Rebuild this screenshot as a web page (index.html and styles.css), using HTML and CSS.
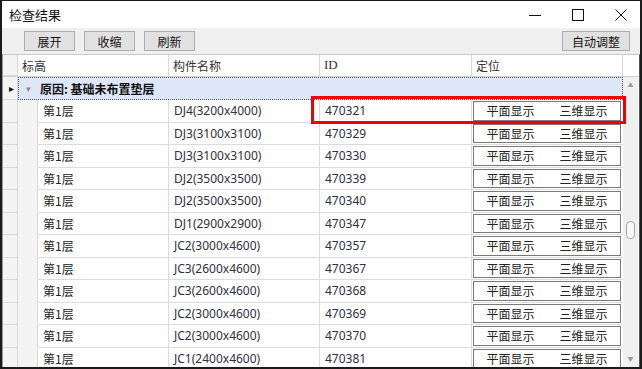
FILE: index.html
```html
<!DOCTYPE html>
<html lang="zh-CN">
<head>
    <meta charset="UTF-8">
    <title>检查结果</title>
    <link rel="stylesheet" href="styles.css">
</head>
<body>
    <div class="window">
        <div class="titlebar">
            <span class="title">检查结果</span>
            <div class="controls">
                <svg width="14" height="14" viewBox="0 0 14 14"><path d="M1 7.5h12" stroke="#111" stroke-width="1"/></svg>
                <svg width="14" height="14" viewBox="0 0 14 14"><rect x="1.5" y="1.5" width="11" height="11" fill="none" stroke="#111" stroke-width="1"/></svg>
                <svg width="14" height="14" viewBox="0 0 14 14"><path d="M1.5 1.5l11 11M12.5 1.5l-11 11" stroke="#111" stroke-width="1"/></svg>
            </div>
        </div>
        <div class="toolbar">
            <button class="btn">展开</button>
            <button class="btn">收缩</button>
            <button class="btn">刷新</button>
            <button class="btn btn-auto">自动调整</button>
        </div>
        <div class="grid">
            <div class="grid-head">
                <div class="hcell ind"></div>
                <div class="hcell">标高</div>
                <div class="hcell">构件名称</div>
                <div class="hcell id-head">ID</div>
                <div class="hcell">定位</div>
                <div class="hcell sb"></div>
            </div>
            <div class="grid-body">
                <div class="rows" id="rows">
                    <div class="group-row">
                        <div class="ind"><span class="cur">&#9656;</span></div>
                        <div class="group-cell">
                            <span class="tog">&#9662;</span>
                            <b>原因: 基础未布置垫层</b>
                        </div>
                    </div>
                </div>
                <div class="vscroll">
                    <span class="arr">&#9650;</span>
                    <div class="thumb"></div>
                    <span class="arr">&#9660;</span>
                </div>
            </div>
            <div class="highlight"></div>
        </div>
    </div>

    <script>
        const items = [
            ['DJ4(3200x4000)', '470321'],
            ['DJ3(3100x3100)', '470329'],
            ['DJ3(3100x3100)', '470330'],
            ['DJ2(3500x3500)', '470339'],
            ['DJ2(3500x3500)', '470340'],
            ['DJ1(2900x2900)', '470347'],
            ['JC2(3000x4600)', '470357'],
            ['JC3(2600x4600)', '470367'],
            ['JC3(2600x4600)', '470368'],
            ['JC2(3000x4600)', '470369'],
            ['JC2(3000x4600)', '470370'],
            ['JC1(2400x4600)', '470381']
        ];
        const rows = document.getElementById('rows');
        items.forEach(function (item) {
            const row = document.createElement('div');
            row.className = 'row';
            row.innerHTML = `
                <div class="ind"></div>
                <div class="indent"></div>
                <div class="cell">第1层</div>
                <div class="cell">${item[0]}</div>
                <div class="cell">${item[1]}</div>
                <div class="cell pos">
                    <div class="pos-box"><span>平面显示</span><span>三维显示</span></div>
                </div>
            `;
            rows.appendChild(row);
        });
    </script>
</body>
</html>
```

FILE: styles.css
```css
body {
    margin: 0;
    font-family: "Noto Sans", "Noto Sans CJK SC", sans-serif;
    font-size: 12px;
    color: #222;
}
.window {
    width: 642px;
    height: 369px;
    box-sizing: border-box;
    border: 2px solid #1b1b1b;
    border-top-width: 1px;
    background: #fff;
    display: flex;
    flex-direction: column;
    overflow: hidden;
}
.titlebar {
    height: 27px;
    flex: none;
    display: flex;
    align-items: center;
    justify-content: space-between;
    background: #fff;
}
.title {
    margin-left: 7px;
    font-family: "Noto Sans CJK SC", sans-serif;
    font-size: 13px;
    color: #111;
}
.controls {
    display: flex;
    gap: 29px;
    margin-right: 12px;
}
.controls svg {
    display: block;
}
.toolbar {
    height: 26px;
    flex: none;
    background: #f0f0f0;
    display: flex;
    align-items: center;
    padding: 0 10px 0 22px;
}
.btn {
    height: 20px;
    width: 51px;
    margin-right: 9px;
    padding: 0;
    background: #e1e1e1;
    border: 1px solid #adadad;
    font-family: "Noto Sans CJK SC", sans-serif;
    font-size: 12px;
    color: #111;
}
.btn-auto {
    width: 68px;
    margin-left: auto;
    margin-right: 0;
}
.grid {
    flex: 1;
    position: relative;
    display: flex;
    flex-direction: column;
    border-left: 1px solid #9a9a9a;
    border-right: 1px solid #555;
    border-top: 1px solid #c8c8c8;
    min-height: 0;
}
.grid-head {
    display: flex;
    height: 21px;
    flex: none;
    border-bottom: 1px solid #d0d0d0;
    background: #fff;
}
.hcell {
    width: 151px;
    box-sizing: border-box;
    border-right: 1px solid #d8d8d8;
    padding: 2px 0 0 4px;
    font-family: "Noto Sans CJK SC", sans-serif;
    color: #333;
}
.hcell.ind {
    width: 15px;
}
.hcell.id-head {
    width: 152px;
    font-family: "Liberation Serif", serif;
    font-size: 13px;
}
.hcell.sb {
    width: 15px;
    border-right: none;
}
.grid-body {
    flex: 1;
    display: flex;
    min-height: 0;
}
.rows {
    width: 620px;
    overflow: hidden;
}
.ind {
    width: 15px;
    flex: none;
    box-sizing: border-box;
    background: #f4f4f4;
    border-right: 1px solid #d8d8d8;
    border-bottom: 1px solid #d8d8d8;
}
.group-row {
    display: flex;
    height: 23px;
}
.cur {
    display: block;
    font-size: 10px;
    line-height: 22px;
    padding-left: 6px;
    color: #111;
}
.group-cell {
    flex: 1;
    box-sizing: border-box;
    background: #dde7f8;
    border: 1px dotted #555;
    display: flex;
    align-items: center;
    padding-left: 7px;
    font-family: "Noto Sans CJK SC", sans-serif;
    font-size: 12px;
}
.group-cell b {
    color: #111;
}
.tog {
    font-size: 9px;
    color: #8a8a8a;
    margin-right: 9px;
}
.row {
    display: flex;
    height: 22.5px;
}
.indent {
    width: 20px;
    flex: none;
    box-sizing: border-box;
    background: #f4f4f4;
    border-right: 1px solid #d8d8d8;
}
.cell {
    width: 151px;
    box-sizing: border-box;
    border-right: 1px solid #dcdcdc;
    border-bottom: 1px solid #dcdcdc;
    padding-left: 5px;
    display: flex;
    align-items: center;
    color: #2f3040;
    white-space: nowrap;
}
.row .cell:nth-child(3) {
    width: 131px;
    font-family: "Noto Sans CJK SC", sans-serif;
    color: #222;
}
.row .cell:nth-child(5) {
    width: 152px;
}
.cell.pos {
    padding: 1px 2px 1px 1px;
    border-right: none;
}
.pos-box {
    flex: 1;
    height: 100%;
    box-sizing: border-box;
    border: 1px solid #7a7a7a;
    background: #fff;
    display: flex;
    align-items: center;
    font-family: "Noto Sans CJK SC", sans-serif;
    color: #222;
}
.pos-box span {
    flex: 1;
    text-align: center;
}
.vscroll {
    width: 15px;
    background: #f0f0f0;
    display: flex;
    flex-direction: column;
    align-items: center;
    justify-content: space-between;
    position: relative;
}
.arr {
    font-size: 6px;
    color: #9a9a9a;
    line-height: 16px;
}
.thumb {
    position: absolute;
    top: 144px;
    left: 3px;
    width: 7px;
    height: 16px;
    border: 1px solid #a6a6a6;
    border-radius: 4px;
    background: #f8f8f8;
}
.highlight {
    position: absolute;
    left: 308px;
    top: 41px;
    width: 309px;
    height: 22px;
    border: 3px solid #f20000;
}
```
